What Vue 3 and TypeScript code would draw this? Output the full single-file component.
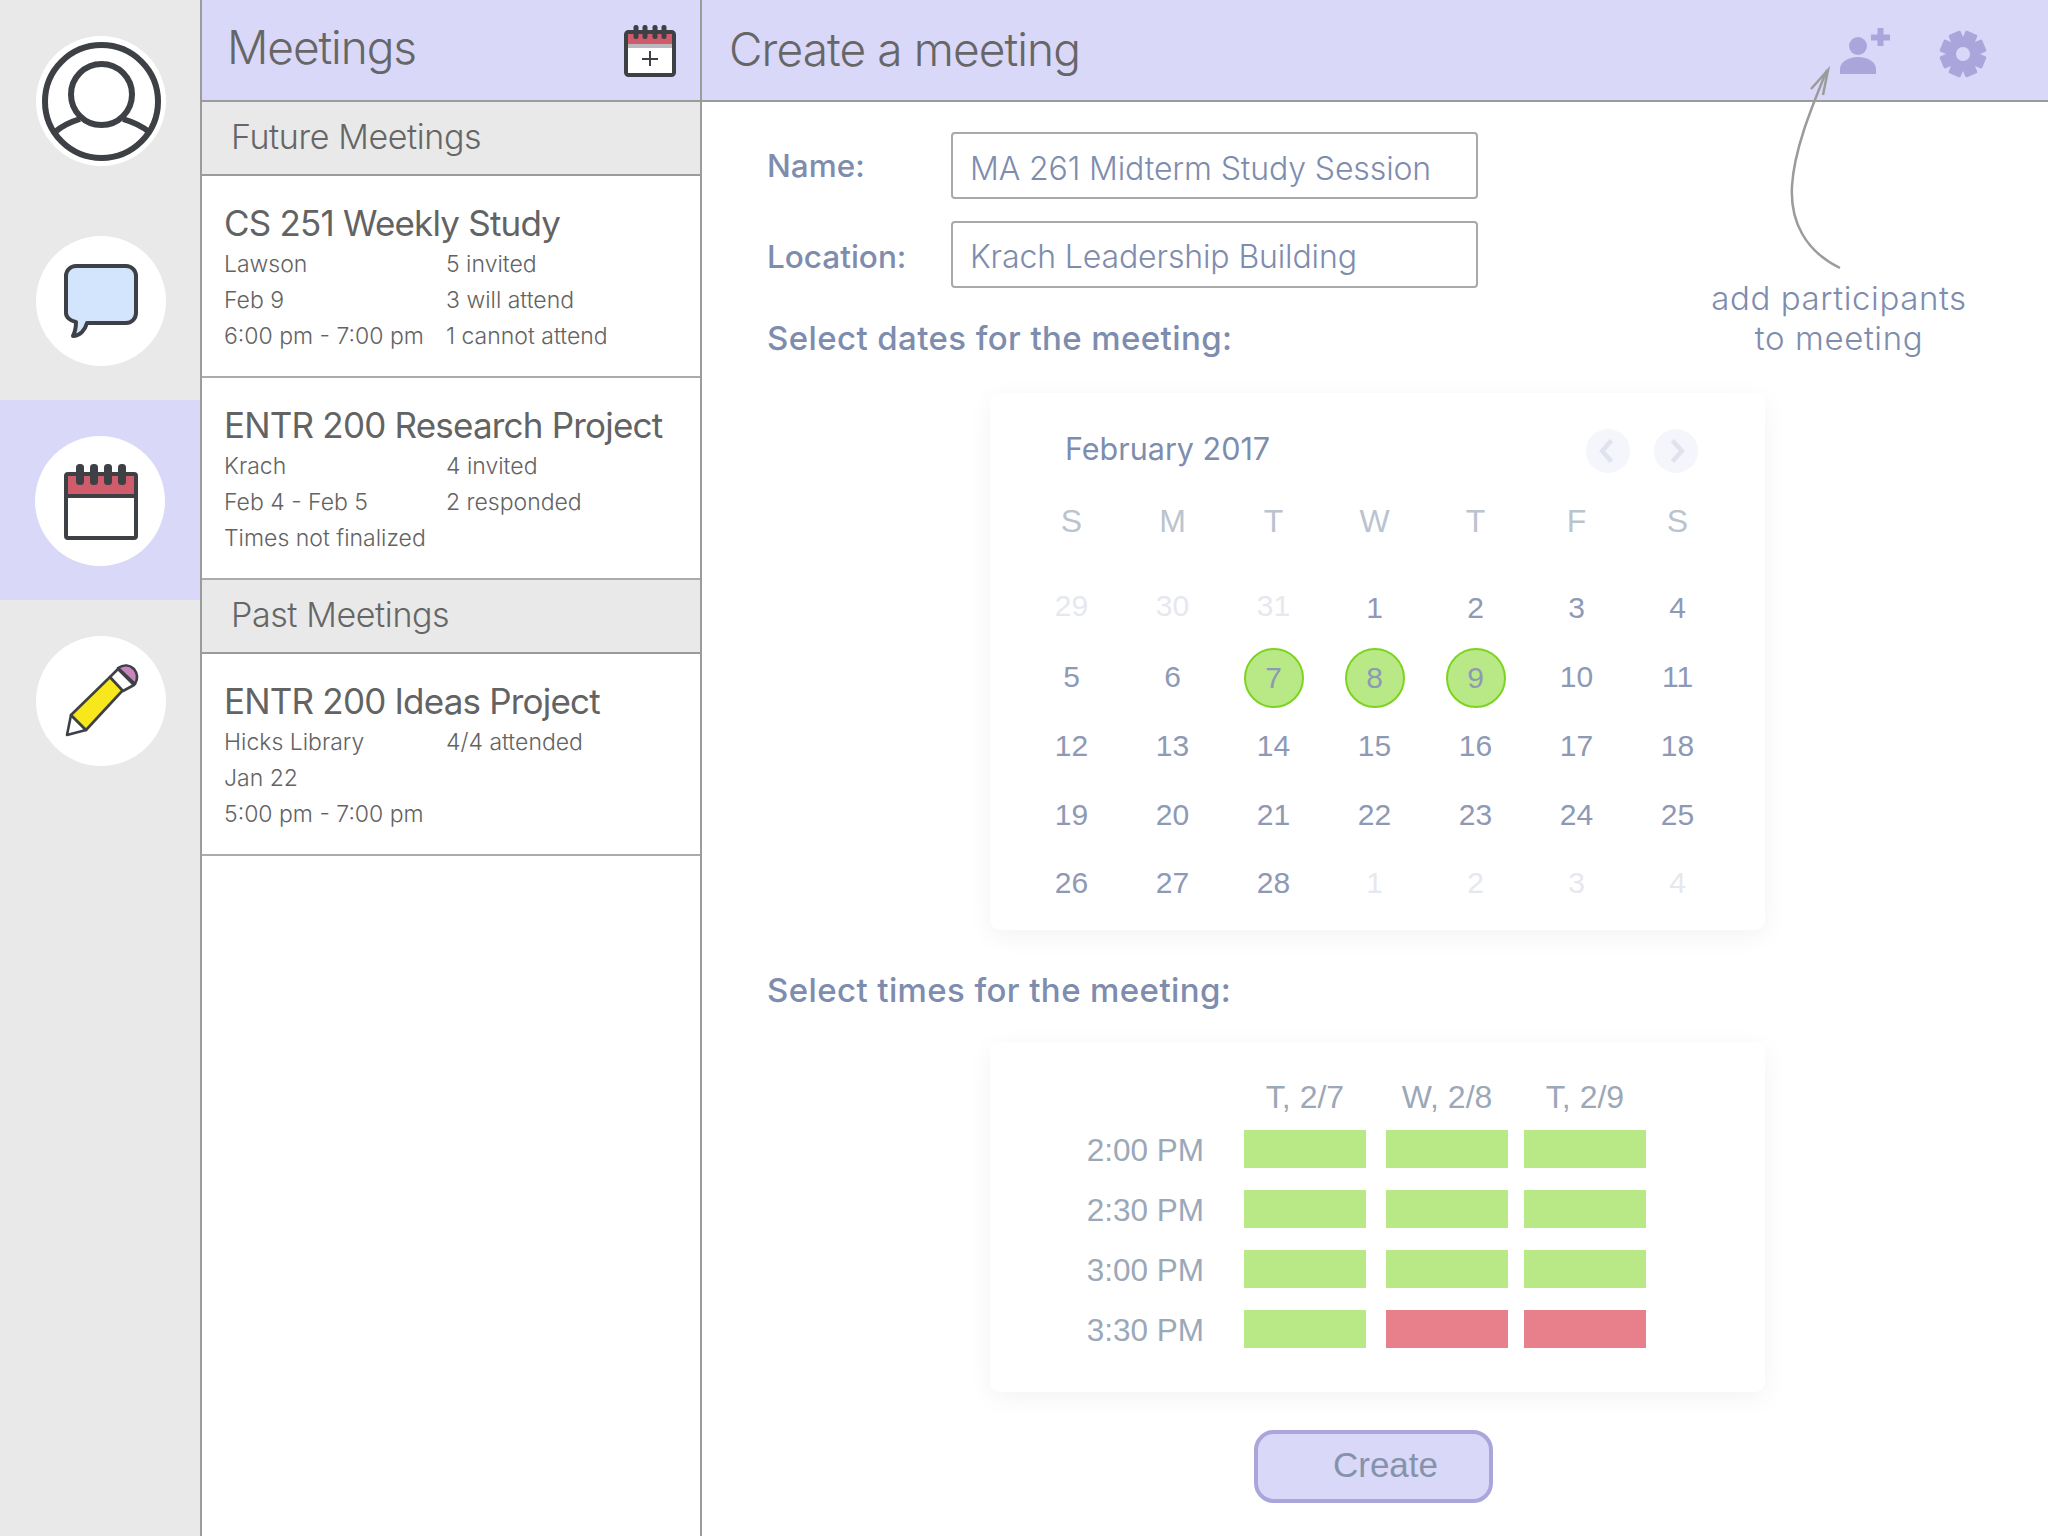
<script setup lang="ts">
interface Meeting { title: string; rows: [string, string][] }
const future: Meeting[] = [
  { title: 'CS 251 Weekly Study', rows: [['Lawson', '5 invited'], ['Feb 9', '3 will attend'], ['6:00 pm - 7:00 pm', '1 cannot attend']] },
  { title: 'ENTR 200 Research Project', rows: [['Krach', '4 invited'], ['Feb 4 - Feb 5', '2 responded'], ['Times not finalized', '']] },
]
const past: Meeting[] = [
  { title: 'ENTR 200 Ideas Project', rows: [['Hicks Library', '4/4 attended'], ['Jan 22', ''], ['5:00 pm - 7:00 pm', '']] },
]
const weekdays = ['S', 'M', 'T', 'W', 'T', 'F', 'S']
const days: { n: number; ghost?: boolean; early?: boolean; sel?: boolean }[] = [
  { n: 29, ghost: true, early: true }, { n: 30, ghost: true, early: true }, { n: 31, ghost: true, early: true },
  ...Array.from({ length: 28 }, (_, i) => ({ n: i + 1, sel: i >= 6 && i <= 8 })),
  { n: 1, ghost: true }, { n: 2, ghost: true }, { n: 3, ghost: true }, { n: 4, ghost: true },
]
const dateCols = ['T, 2/7', 'W, 2/8', 'T, 2/9']
const slots: { time: string; cells: boolean[] }[] = [
  { time: '2:00 PM', cells: [true, true, true] },
  { time: '2:30 PM', cells: [true, true, true] },
  { time: '3:00 PM', cells: [true, true, true] },
  { time: '3:30 PM', cells: [true, false, false] },
]
const teeth = [22.5, 67.5, 112.5, 157.5, 202.5, 247.5, 292.5, 337.5]
</script>

<template>
  <div class="app">
    <nav class="rail">
      <div class="rail-item">
        <div class="disc">
          <svg viewBox="36 36 130 130" width="130" height="130" fill="none" stroke="#3d4045" stroke-width="6">
            <circle cx="101.5" cy="101.5" r="56.5" />
            <circle cx="101.5" cy="94.5" r="30.5" />
            <path d="M55 132 C62 126 70 122 80 119 M123 119 C133 122 142 126 149 132" />
          </svg>
        </div>
      </div>
      <div class="rail-item">
        <div class="disc">
          <svg viewBox="36 236 130 130" width="130" height="130">
            <path d="M76 266 H126 a10 10 0 0 1 10 10 V313 a10 10 0 0 1 -10 10 H87 C85 330 80 336 73 336 C75 332 76 328 76 322 C70 321 66 317 66 313 V276 a10 10 0 0 1 10 -10 Z" fill="#d3e5fd" stroke="#3d4045" stroke-width="4" stroke-linejoin="round" />
          </svg>
        </div>
      </div>
      <div class="rail-item active">
        <div class="disc">
          <svg viewBox="35 436 130 130" width="130" height="130">
            <rect x="66" y="474" width="70" height="64" rx="2" fill="#fff" stroke="#3d4045" stroke-width="4" />
            <rect x="68" y="476" width="66" height="19" fill="#cf5b6b" />
            <rect x="65" y="494" width="72" height="4" fill="#3d4045" />
            <rect x="76" y="464" width="8" height="21" rx="3.5" fill="#3d4045" />
            <rect x="90" y="464" width="8" height="21" rx="3.5" fill="#3d4045" />
            <rect x="104" y="464" width="8" height="21" rx="3.5" fill="#3d4045" />
            <rect x="118" y="464" width="8" height="21" rx="3.5" fill="#3d4045" />
          </svg>
        </div>
      </div>
      <div class="rail-item">
        <div class="disc">
          <svg viewBox="36 636 130 130" width="130" height="130" stroke="#3d4045" stroke-width="2.6" stroke-linejoin="round">
            <path d="M71 715 L67 735 L86 730 Z" fill="#fff" />
            <path d="M71 715 L110 677 L123 690 L86 730 Z" fill="#f9e71e" />
            <path d="M110 677 L118 669 L134 685 L123 691 Z" fill="#fff" />
            <path d="M118 668 C124 664 130 665 134 669 C138 674 138 679 135 684 Z" fill="#c983bd" />
          </svg>
        </div>
      </div>
    </nav>

    <section class="list">
      <header class="bar list-bar">
        <h1 class="bar-title list-title">Meetings</h1>
        <svg class="cal-plus" viewBox="622 24 56 56" width="56" height="56">
          <rect x="626" y="33" width="48" height="43" rx="2.5" fill="#fff" stroke="#3d4045" stroke-width="4" />
          <rect x="628" y="35" width="44" height="10" fill="#cf5b6b" />
          <rect x="628" y="45" width="44" height="4" fill="#b9b9bf" />
          <rect x="633.5" y="26" width="5" height="14" rx="2.2" fill="#3d4045" />
          <rect x="642.5" y="26" width="5" height="14" rx="2.2" fill="#3d4045" />
          <rect x="652.5" y="26" width="5" height="14" rx="2.2" fill="#3d4045" />
          <rect x="661.5" y="26" width="5" height="14" rx="2.2" fill="#3d4045" />
          <path d="M642 60 H658 M650 52 V67" stroke="#3d4045" stroke-width="2" />
        </svg>
      </header>
      <h2 class="section">Future Meetings</h2>
      <article v-for="m in future" :key="m.title" class="meeting">
        <h3 class="meeting-title">{{ m.title }}</h3>
        <div v-for="(r, i) in m.rows" :key="i" class="meeting-row">
          <span>{{ r[0] }}</span><span>{{ r[1] }}</span>
        </div>
      </article>
      <h2 class="section">Past Meetings</h2>
      <article v-for="m in past" :key="m.title" class="meeting">
        <h3 class="meeting-title">{{ m.title }}</h3>
        <div v-for="(r, i) in m.rows" :key="i" class="meeting-row">
          <span>{{ r[0] }}</span><span>{{ r[1] }}</span>
        </div>
      </article>
    </section>

    <main class="main">
      <header class="bar main-bar">
        <h1 class="bar-title main-title">Create a meeting</h1>
        <div class="bar-actions">
          <svg viewBox="1838 25 54 58" width="54" height="58" fill="#aaa6dc">
            <circle cx="1858" cy="46" r="9" />
            <path d="M1840 74 V69 C1840 62 1848 57 1858 57 C1868 57 1876 62 1876 69 V74 Z" />
            <path d="M1871 34.5 H1877.5 V28 H1883.5 V34.5 H1890 V40.5 H1883.5 V46 H1877.5 V40.5 H1871 Z" />
          </svg>
          <svg viewBox="1938 29 50 50" width="50" height="50" fill="#aaa6dc">
            <rect v-for="t in teeth" :key="t" x="1956.5" y="31" width="13" height="12" rx="1.5" :transform="`rotate(${t} 1963 54)`" />
            <circle cx="1963" cy="54" r="17" />
            <circle cx="1963" cy="54" r="7" fill="#dad8f8" />
          </svg>
        </div>
      </header>

      <div class="form">
        <div class="field">
          <label class="field-label">Name:</label>
          <div class="input">MA 261 Midterm Study Session</div>
        </div>
        <div class="field">
          <label class="field-label loc">Location:</label>
          <div class="input">Krach Leadership Building</div>
        </div>

        <h2 class="prompt dates">Select dates for the meeting:</h2>
        <div class="card calendar">
          <div class="cal-head">
            <span class="month">February 2017</span>
            <div class="nav">
              <span class="nav-btn">
                <svg viewBox="0 0 24 24" width="28" height="28" fill="none" stroke="#e0e3ee" stroke-width="4"><path d="M15 3 L7 12 L15 21" /></svg>
              </span>
              <span class="nav-btn">
                <svg viewBox="0 0 24 24" width="28" height="28" fill="none" stroke="#e0e3ee" stroke-width="4"><path d="M9 3 L17 12 L9 21" /></svg>
              </span>
            </div>
          </div>
          <div class="week">
            <span v-for="(w, i) in weekdays" :key="i">{{ w }}</span>
          </div>
          <div class="days">
            <span v-for="(d, i) in days" :key="i" class="day" :class="{ ghost: d.ghost, early: d.early, sel: d.sel }"><span class="num">{{ d.n }}</span></span>
          </div>
        </div>

        <h2 class="prompt times">Select times for the meeting:</h2>
        <div class="card schedule">
          <div class="sched-grid">
            <span></span>
            <span v-for="c in dateCols" :key="c" class="col-head">{{ c }}</span>
            <template v-for="s in slots" :key="s.time">
              <span class="time">{{ s.time }}</span>
              <span v-for="(ok, i) in s.cells" :key="i" class="slot" :class="ok ? 'yes' : 'no'"></span>
            </template>
          </div>
        </div>

        <button class="create" type="button">Create</button>
      </div>

      <svg class="arrow" viewBox="0 0 80 220" width="80" height="220" fill="none" stroke="#9b9b9b" stroke-width="2.5">
        <path d="M70 212 C35 195 20 165 22 130 C24 95 40 55 57 14" />
        <path d="M41 33 L58 14 L53 39" />
      </svg>
      <p class="note">add participants<br />to meeting</p>
    </main>
  </div>
</template>

<style>
html, body { margin: 0; background: #fff; }
</style>

<style scoped>
.app {
  display: flex;
  width: 2048px;
  height: 1536px;
  overflow: hidden;
  font-family: Inter, "Liberation Sans", sans-serif;
  background: #fff;
}
h1, h2, h3, p { margin: 0; font-weight: normal; }

.rail {
  width: 200px;
  flex: none;
  background: #e9e9e9;
  border-right: 2px solid #9b9b9b;
}
.rail-item {
  height: 200px;
  box-sizing: border-box;
  padding-top: 36px;
  padding-left: 36px;
}
.rail-item.active { background: #dad8f8; padding-left: 35px; }
.disc {
  width: 130px;
  height: 130px;
  border-radius: 50%;
  background: #fff;
}
.disc svg { display: block; }

.bar {
  display: flex;
  align-items: center;
  height: 100px;
  background: #dad8f8;
  border-bottom: 2px solid #9b9b9b;
}
.bar-title {
  font-size: 46px;
  font-weight: 300;
  color: #666;
}
.list-title { letter-spacing: -1.1px; margin: 0 0 6px -2px; }
.main-title { letter-spacing: -0.9px; margin-bottom: 3px; }

.list {
  width: 498px;
  flex: none;
  border-right: 2px solid #9b9b9b;
}
.list-bar { padding-left: 27px; padding-right: 22px; justify-content: space-between; }
.cal-plus { display: block; margin-top: 2px; }
.section {
  height: 72px;
  line-height: 70px;
  padding-left: 29px;
  background: #e9e9e9;
  border-bottom: 2px solid #9b9b9b;
  font-size: 34px;
  font-weight: 300;
  color: #666;
  letter-spacing: -0.4px;
}
.meeting {
  box-sizing: border-box;
  height: 202px;
  padding: 24px 0 0 22px;
  border-bottom: 2px solid #ababab;
  color: #636363;
}
.meeting-title {
  font-size: 35px;
  line-height: 46px;
  font-weight: 400;
  letter-spacing: -0.8px;
  white-space: nowrap;
}
.meeting-row {
  display: grid;
  grid-template-columns: 222px 1fr;
  height: 36px;
  line-height: 36px;
  font-size: 23px;
  font-weight: 300;
  white-space: nowrap;
}

.main { position: relative; flex: 1; min-width: 0; }
.main-bar { padding-left: 27px; justify-content: space-between; }
.bar-actions {
  display: flex;
  align-items: center;
  gap: 46px;
  padding-right: 60px;
  margin-top: 8px;
}
.bar-actions svg { display: block; }

.form { padding: 30px 0 0 65px; }
.field { display: flex; align-items: center; height: 67px; margin-bottom: 22px; }
.field-label {
  width: 184px;
  font-size: 31.5px;
  font-weight: 500;
  color: #7e8cad;
  margin-top: -1px;
}
.field-label.loc { margin-top: 3px; }
.input {
  box-sizing: border-box;
  width: 527px;
  height: 67px;
  line-height: 68px;
  padding-left: 17px;
  border: 2px solid #a9a9a9;
  border-radius: 4px;
  font-size: 32px;
  font-weight: 300;
  letter-spacing: -0.12px;
  color: #7e8cad;
}
.field:first-child .input { line-height: 70px; }
.prompt {
  height: 40px;
  line-height: 40px;
  font-size: 33px;
  font-weight: 500;
  letter-spacing: 0.4px;
  color: #7e8cad;
}
.prompt.dates { margin-top: 30px; }
.prompt.times { margin-top: 40px; }

.card {
  margin-left: 223px;
  width: 775px;
  box-sizing: border-box;
  background: #fff;
  border-radius: 10px;
  box-shadow: 0 6px 26px rgba(0, 0, 0, 0.05);
}
.calendar { margin-top: 35px; height: 537px; padding-top: 36px; }
.cal-head {
  display: flex;
  justify-content: space-between;
  align-items: center;
  height: 44px;
  padding: 0 67px 0 75px;
}
.month { font-size: 30.5px; font-weight: 400; color: #7e8cad; margin-top: -6px; }
.nav { display: flex; gap: 24px; }
.nav-btn {
  display: flex;
  align-items: center;
  justify-content: center;
  width: 44px;
  height: 44px;
  border-radius: 50%;
  background: #f4f6fb;
}
.week, .days {
  display: grid;
  grid-template-columns: repeat(7, 101px);
  margin-left: 31px;
  text-align: center;
  font-family: "Liberation Sans", Arial, sans-serif;
  font-size: 30px;
}
.week { margin-top: 28px; height: 40px; line-height: 40px; color: #bac4cf; font-size: 32px; }
.days { margin-top: 33px; grid-auto-rows: 68.75px; color: #8e99b5; }
.day { display: flex; align-items: center; justify-content: center; }
.num {
  display: block;
  width: 60px;
  height: 60px;
  line-height: 60px;
  border-radius: 50%;
  box-sizing: border-box;
}
.day.ghost { color: #e6e8ef; }
.day.early .num { margin-top: -4px; }
.day.sel .num {
  background: #b9e986;
  border: 2px solid #7ed321;
  line-height: 56px;
  margin-top: 2px;
}

.schedule { margin-top: 32px; height: 350px; padding-top: 35px; }
.sched-grid {
  display: grid;
  grid-template-columns: 254px 142px 138px 122px;
  grid-template-rows: 31px repeat(4, 38px);
  row-gap: 22px;
  font-family: "Liberation Sans", Arial, sans-serif;
  font-size: 31.5px;
  color: #9ba8b8;
}
.col-head { width: 122px; text-align: center; line-height: 40px; font-size: 32px; }
.time { text-align: right; padding-right: 40px; line-height: 40px; }
.slot { width: 122px; height: 38px; }
.slot.yes { background: #b9e986; }
.slot.no { background: #e8808c; }

.create {
  display: block;
  margin: 38px 0 0 487px;
  width: 239px;
  height: 73px;
  box-sizing: border-box;
  padding: 0 0 3px 24px;
  background: #dad8f8;
  border: 4px solid #aaa6dc;
  border-radius: 20px;
  font-family: "Liberation Sans", Arial, sans-serif;
  font-size: 35px;
  color: #8493ab;
}

.arrow {
  position: absolute;
  left: 1068px;
  top: 56px;
  pointer-events: none;
}
.note {
  position: absolute;
  left: 1000px;
  top: 278px;
  width: 274px;
  text-align: center;
  font-size: 33px;
  line-height: 40px;
  font-weight: 300;
  color: #7e8cad;
  letter-spacing: 0.6px;
}
</style>
